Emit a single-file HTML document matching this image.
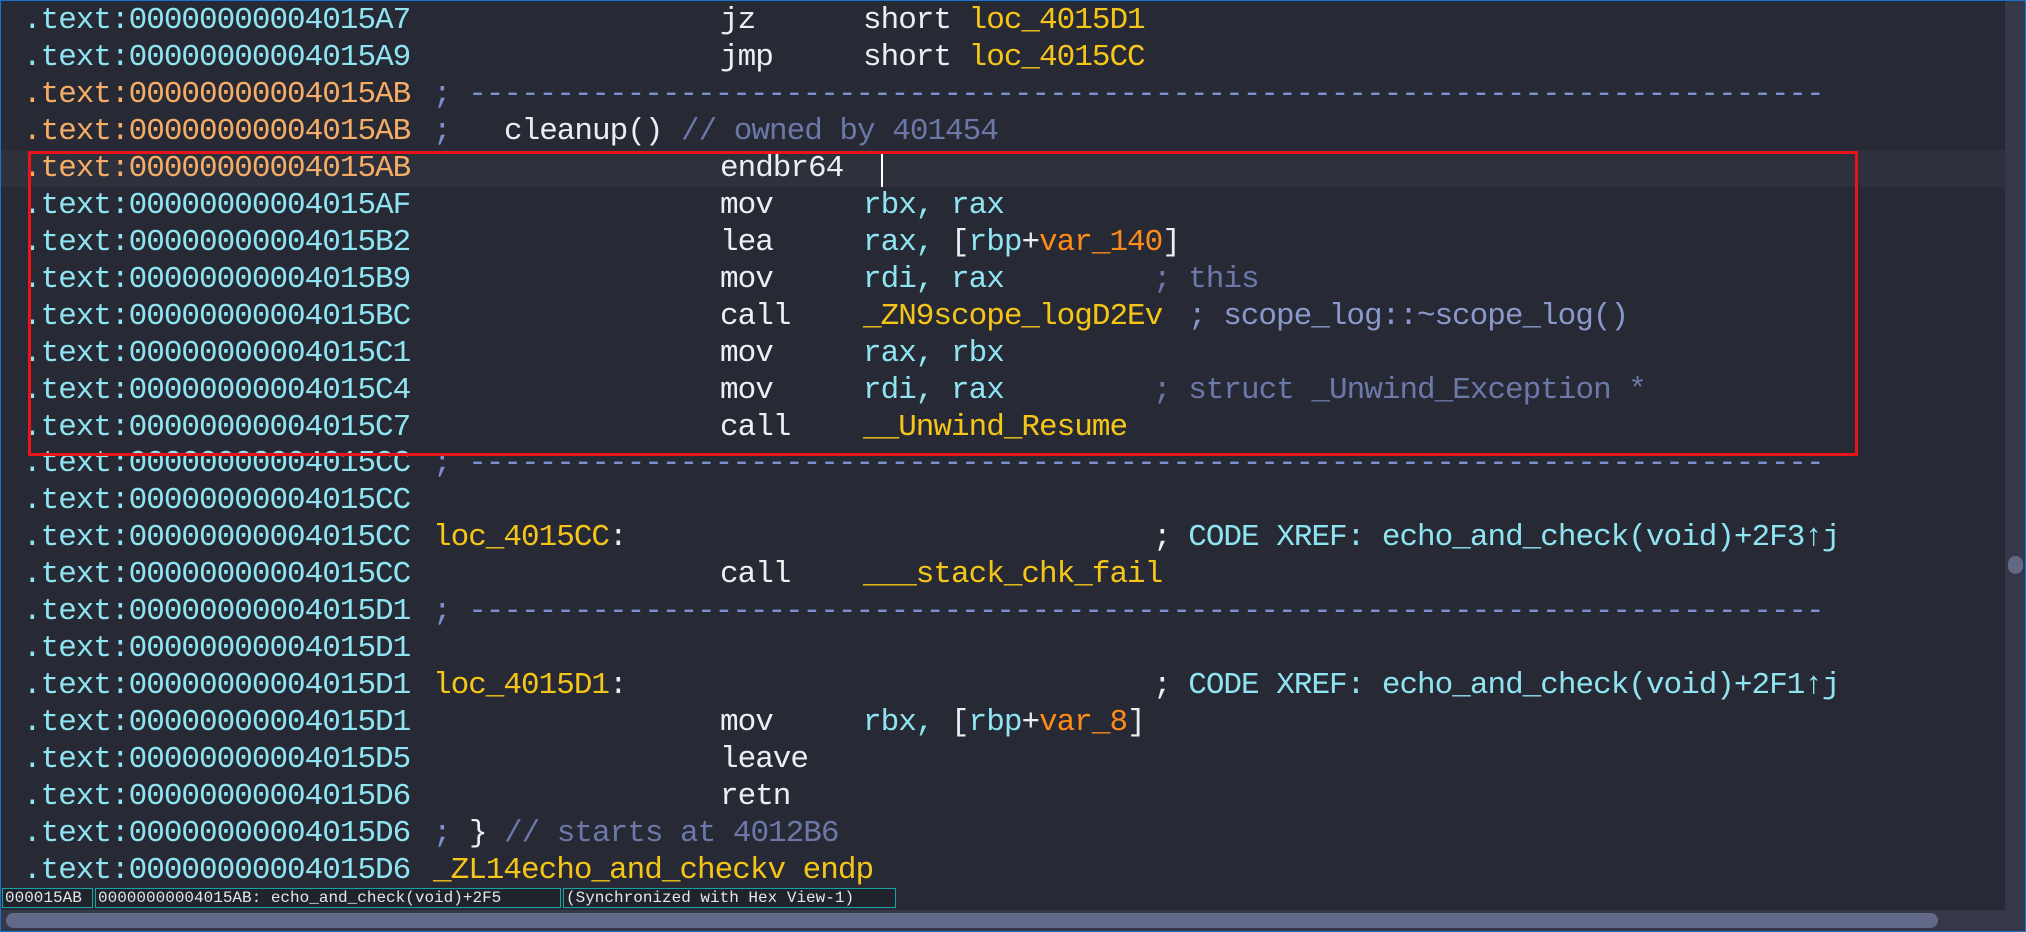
<!DOCTYPE html>
<html><head><meta charset="utf-8"><style>
*{margin:0;padding:0;box-sizing:border-box}
body{width:2026px;height:932px;overflow:hidden;background:#272a35;position:relative;font-family:"Liberation Mono",monospace}
#frame{position:absolute;left:0;top:0;width:2026px;height:932px;border:1px solid #1a73c8;pointer-events:none;z-index:9}
.l{position:absolute;left:0;height:37px;width:2005px;font-size:31px;letter-spacing:-1px;line-height:37px;white-space:pre}
.l span{position:absolute;top:0}
.a{left:23px;color:#8fe4f2}
.o{color:#f4ac67}
.m{left:720px;color:#eceef2}
.p{left:863px;color:#8fe4f2}
.c{color:#6b78a8}
.y{color:#f5c518}
.v{color:#ff8c1a}
.w{color:#eceef2}
.d{color:#7d8fcf}
.cur{background:#2e313b}
#box{position:absolute;left:28px;top:151px;width:1830px;height:305px;border:3px solid #e8141a;z-index:5}
#caret{position:absolute;left:881px;top:152px;width:2px;height:35px;background:#fff}
#vs{position:absolute;left:2005px;top:0;width:21px;height:912px;background:#353848}
#vth{position:absolute;left:2008px;top:556px;width:15px;height:18px;border-radius:8px;background:#636985}
#hs{position:absolute;left:0;top:910px;width:2026px;height:22px;background:#353848}
#hth{position:absolute;left:6px;top:913px;width:1932px;height:15px;border-radius:8px;background:#636a89}
.sb{position:absolute;top:888px;height:20px;border:1px solid #17a3a3;color:#e6e6e6;font-size:16px;line-height:18px;padding-left:2px;white-space:pre;background:#20232c}
</style></head><body>
<div id="frame"></div>
<div id="vs"></div><div id="vth"></div>
<div class="l" style="top:2px"><span class="a">.text:00000000004015A7</span><span class="m">jz</span><span class="p"><span class="w" style="position:static">short </span><span class="y" style="position:static">loc_4015D1</span></span></div>
<div class="l" style="top:39px"><span class="a">.text:00000000004015A9</span><span class="m">jmp</span><span class="p"><span class="w" style="position:static">short </span><span class="y" style="position:static">loc_4015CC</span></span></div>
<div class="l" style="top:76px"><span class="a o">.text:00000000004015AB</span><span class="d" style="left:433px">; -----------------------------------------------------------------------------</span></div>
<div class="l" style="top:113px"><span class="a o">.text:00000000004015AB</span><span class="d" style="left:433px">;</span><span class="w" style="left:504px">cleanup()</span><span class="c" style="left:681px">// owned by 401454</span></div>
<div class="l cur" style="top:150px"><span class="a o">.text:00000000004015AB</span><span class="m">endbr64</span></div>
<div class="l" style="top:187px"><span class="a">.text:00000000004015AF</span><span class="m">mov</span><span class="p">rbx, rax</span></div>
<div class="l" style="top:224px"><span class="a">.text:00000000004015B2</span><span class="m">lea</span><span class="p">rax, <span class="w" style="position:static">[</span>rbp<span class="w" style="position:static">+</span><span class="v" style="position:static">var_140</span><span class="w" style="position:static">]</span></span></div>
<div class="l" style="top:261px"><span class="a">.text:00000000004015B9</span><span class="m">mov</span><span class="p">rdi, rax</span><span class="c" style="left:1153px">; this</span></div>
<div class="l" style="top:298px"><span class="a">.text:00000000004015BC</span><span class="m">call</span><span class="p y">_ZN9scope_logD2Ev</span><span class="c" style="left:1188px;color:#8a98cc">; scope_log::~scope_log()</span></div>
<div class="l" style="top:335px"><span class="a">.text:00000000004015C1</span><span class="m">mov</span><span class="p">rax, rbx</span></div>
<div class="l" style="top:372px"><span class="a">.text:00000000004015C4</span><span class="m">mov</span><span class="p">rdi, rax</span><span class="c" style="left:1153px">; struct _Unwind_Exception *</span></div>
<div class="l" style="top:409px"><span class="a">.text:00000000004015C7</span><span class="m">call</span><span class="p y">__Unwind_Resume</span></div>
<div class="l" style="top:445px"><span class="a">.text:00000000004015CC</span><span class="d" style="left:433px">; -----------------------------------------------------------------------------</span></div>
<div class="l" style="top:482px"><span class="a">.text:00000000004015CC</span></div>
<div class="l" style="top:519px"><span class="a">.text:00000000004015CC</span><span class="y" style="left:433px">loc_4015CC<span class="w" style="position:static">:</span></span><span style="left:1153px;color:#8fe4f2"><span class="w" style="position:static">; </span>CODE XREF: echo_and_check(void)+2F3↑j</span></div>
<div class="l" style="top:556px"><span class="a">.text:00000000004015CC</span><span class="m">call</span><span class="p y">___stack_chk_fail</span></div>
<div class="l" style="top:593px"><span class="a">.text:00000000004015D1</span><span class="d" style="left:433px">; -----------------------------------------------------------------------------</span></div>
<div class="l" style="top:630px"><span class="a">.text:00000000004015D1</span></div>
<div class="l" style="top:667px"><span class="a">.text:00000000004015D1</span><span class="y" style="left:433px">loc_4015D1<span class="w" style="position:static">:</span></span><span style="left:1153px;color:#8fe4f2"><span class="w" style="position:static">; </span>CODE XREF: echo_and_check(void)+2F1↑j</span></div>
<div class="l" style="top:704px"><span class="a">.text:00000000004015D1</span><span class="m">mov</span><span class="p">rbx, <span class="w" style="position:static">[</span>rbp<span class="w" style="position:static">+</span><span class="v" style="position:static">var_8</span><span class="w" style="position:static">]</span></span></div>
<div class="l" style="top:741px"><span class="a">.text:00000000004015D5</span><span class="m">leave</span></div>
<div class="l" style="top:778px"><span class="a">.text:00000000004015D6</span><span class="m">retn</span></div>
<div class="l" style="top:815px"><span class="a">.text:00000000004015D6</span><span class="d" style="left:433px">;</span><span class="w" style="left:469px">}</span><span class="c" style="left:504px">// starts at 4012B6</span></div>
<div class="l" style="top:852px"><span class="a">.text:00000000004015D6</span><span class="y" style="left:433px">_ZL14echo_and_checkv endp</span></div>
<div id="box"></div><div id="caret"></div>
<div class="sb" style="left:2px;width:91px">000015AB</div>
<div class="sb" style="left:95px;width:466px">00000000004015AB: echo_and_check(void)+2F5</div>
<div class="sb" style="left:563px;width:333px">(Synchronized with Hex View-1)</div>
<div id="hs"></div><div id="hth"></div>
</body></html>
